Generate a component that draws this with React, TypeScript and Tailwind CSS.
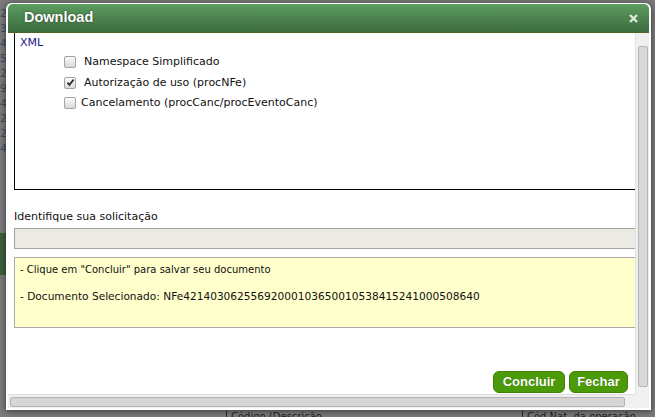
import React from 'react';

const body = "font-['DejaVu_Sans',Verdana,sans-serif]";
const arial = "font-['Liberation_Sans',Arial,sans-serif]";

function Checkbox({ checked }: { checked?: boolean }) {
  return (
    <span className="inline-flex w-[12px] h-[12px] shrink-0 items-center justify-center rounded-[2px] border border-[#a3a3a3] bg-linear-to-b from-[#fbfbfb] to-[#d9d9d9]">
      {checked && (
        <svg width="9" height="9" viewBox="0 0 9 9">
          <path d="M1.5 4.6 L3.4 6.8 L7.6 1.6" fill="none" stroke="#2a2a2a" strokeWidth="1.7" />
        </svg>
      )}
    </span>
  );
}

export default function App() {
  const options = [
    { label: 'Namespace Simplificado', checked: false, gap: 'gap-[8px]' },
    { label: 'Autorização de uso (procNFe)', checked: true, gap: 'gap-[8px]' },
    { label: 'Cancelamento (procCanc/procEventoCanc)', checked: false, gap: 'gap-[5px]' },
  ];

  return (
    <div className={`relative w-[655px] h-[417px] overflow-hidden bg-[#7a7a7a] ${body}`}>
      {/* dimmed page behind the dialog */}
      <div className="flex flex-col gap-[3px] pt-[8px] text-[11px] leading-[12px] text-[#3a4c62]">
        {['2', '3', '4', '5', '20', '90', '46', '26', '26', '47'].map((t, i) => (
          <div key={i} className="h-[12px]">{t}</div>
        ))}
      </div>
      <div className="absolute left-0 top-[233px] w-[6px] h-[42px] bg-[#3e5f3e]" />
      <div className="absolute left-0 top-[411px] flex w-[655px] text-[10px] leading-[12px] text-[#1f1f1f]">
        <span className="ml-[226px] border-l border-[#222] pl-[4px]">Código  (Descrição</span>
        <span className="ml-[200px] border-l border-[#222] pl-[4px]">Cód  Nat. da operação</span>
      </div>

      {/* dialog window */}
      <div className="absolute left-[6px] top-[3px] w-[645px] h-[407px] flex flex-col bg-white border-x-2 border-t border-b-2 border-white rounded-t-[6px] shadow-[0_1px_6px_rgba(0,0,0,0.55)]">
        {/* title bar */}
        <div className="h-[29px] shrink-0 flex items-center justify-between rounded-t-[5px] bg-linear-to-b from-[#5c9c60] to-[#3d6c3f] border-b border-[#4b6427] pl-[16px] pr-[11px]">
          <span className={`${arial} text-[14.5px] font-bold text-white [text-shadow:0_0_2px_rgba(0,0,0,0.6)]`}>Download</span>
          <svg width="9" height="9" viewBox="0 0 9 9">
            <path d="M1 1 L8 8 M8 1 L1 8" stroke="#dde7dc" strokeWidth="2.4" />
          </svg>
        </div>

        {/* body + vertical scrollbar */}
        <div className="flex h-[361px] shrink-0">
          <div className="flex-1 overflow-hidden flex flex-col pl-[6px]">
            <div className="w-[640px] shrink-0 h-[157px] border-l border-b border-black pl-[5px] pt-[3px]">
              <div className="text-[11px] leading-[14px] text-[#1a1a8a]">XML</div>
              <div className="mt-[2px] pl-[44px]">
                {options.map(o => (
                  <div key={o.label} className={`h-[20.5px] flex items-center ${o.gap} text-[11px] text-[#111]`}>
                    <Checkbox checked={o.checked} />
                    <span>{o.label}</span>
                  </div>
                ))}
              </div>
            </div>

            <div className="mt-[20px] text-[11px] leading-[14px] text-[#111]">Identifique sua solicitação</div>
            <div className="mt-[4px] w-[640px] h-[21px] shrink-0 bg-[#ebebe4] border border-[#a3a3a3]" />

            <div className="mt-[8px] w-[640px] h-[71px] shrink-0 bg-[#ffffcc] border border-[#a9a9a9] pl-[5px] pt-[5px] text-[#111]">
              <div className="text-[10px] leading-[14px]">- Clique em "Concluir" para salvar seu documento</div>
              <div className="mt-[12px] text-[10.6px] leading-[14px]">
                - Documento Selecionado: NFe42140306255692000103650010538415241000508640
              </div>
            </div>

            <div className="mt-auto mb-[1px] flex justify-end gap-[4px] pr-[7px]">
              <button className={`${arial} h-[22px] w-[72px] rounded-[6px] bg-[#4b9a08] border border-[#3f8006] text-[13px] font-bold text-white [text-shadow:0_0_1px_rgba(0,0,0,0.4)]`}>
                Concluir
              </button>
              <button className={`${arial} h-[22px] w-[59px] rounded-[6px] bg-[#4b9a08] border border-[#3f8006] text-[13px] font-bold text-white [text-shadow:0_0_1px_rgba(0,0,0,0.4)]`}>
                Fechar
              </button>
            </div>
          </div>

          <div className="w-[14px] shrink-0 bg-[#f0f0f0] border-l border-[#e2e2e2] flex flex-col items-center">
            <div className="mt-[13px] w-[10px] h-[341px] rounded-[2px] bg-[#d9d9d9] border border-[#b5b5b5]" />
          </div>
        </div>

        {/* horizontal scrollbar */}
        <div className="flex h-[14px] shrink-0">
          <div className="flex-1 bg-[#f0f0f0] border-t border-[#dedede] pl-[2px] pt-[2px]">
            <div className="w-[615px] h-[10px] rounded-[2px] bg-[#d6d6d6] border border-[#b3b3b3]" />
          </div>
          <div className="w-[14px] shrink-0 bg-[#f0f0f0]" />
        </div>
      </div>
    </div>
  );
}
